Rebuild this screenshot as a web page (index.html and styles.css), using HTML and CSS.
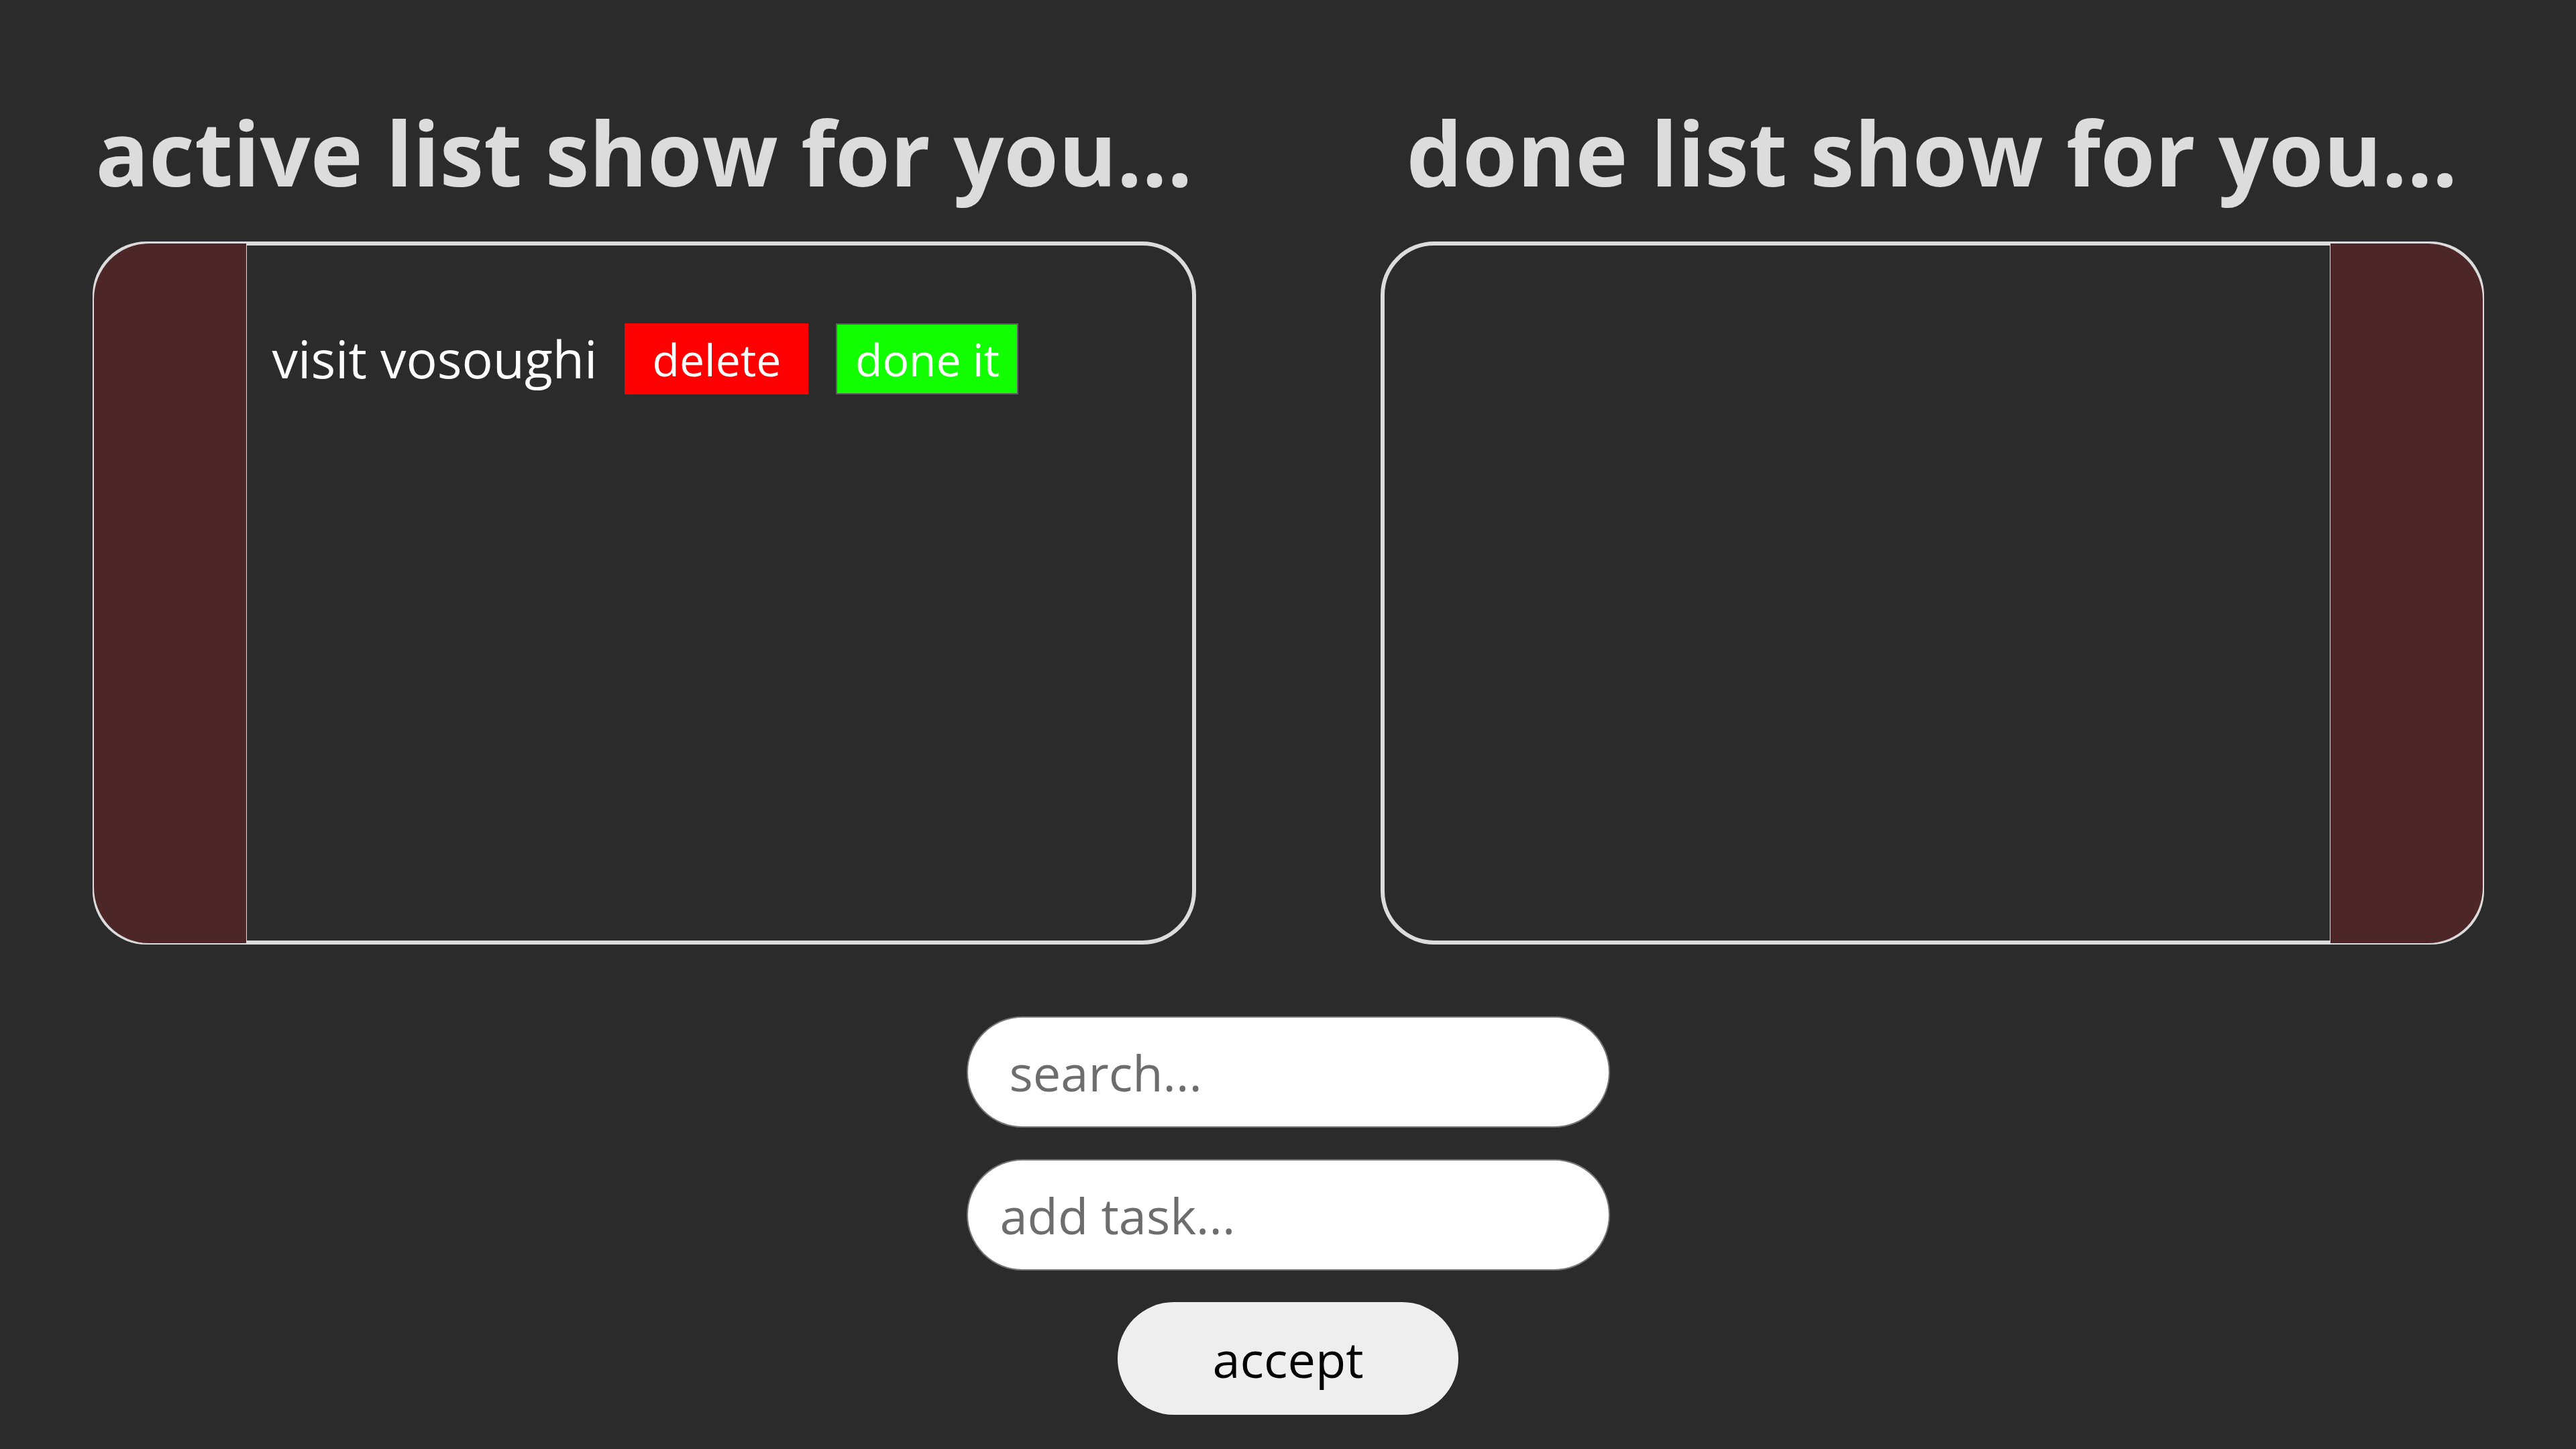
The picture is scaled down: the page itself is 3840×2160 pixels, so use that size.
FILE: index.html
```html
<!DOCTYPE html>
<html lang="en">
<head>
<meta charset="utf-8">
<title>todo list</title>
<link rel="stylesheet" href="styles.css">
</head>
<body>
<main class="page">
  <section class="lists">
    <div class="column">
      <h1 class="title">active list show for you...</h1>
      <div class="box">
        <div class="side side-left"></div>
        <ul class="items">
          <li class="item">
            <span class="item-text">visit vosoughi</span>
            <button class="btn btn-delete">delete</button>
            <button class="btn btn-done">done it</button>
          </li>
        </ul>
      </div>
    </div>
    <div class="column">
      <h1 class="title">done list show for you...</h1>
      <div class="box">
        <ul class="items"></ul>
        <div class="side side-right"></div>
      </div>
    </div>
  </section>
  <section class="controls">
    <input class="field field-search" type="text" placeholder="search...">
    <input class="field field-add" type="text" placeholder="add task...">
    <button class="accept">accept</button>
  </section>
</main>
</body>
</html>
```

FILE: styles.css
```css
html, body {
  margin: 0;
  padding: 0;
  background: #2b2b2b;
}

body {
  font-family: "Open Sans", "Noto Sans", sans-serif;
  width: 3840px;
  height: 2160px;
  overflow: hidden;
}

.page {
  padding-top: 146px;
}

.lists {
  display: grid;
  grid-template-columns: 1fr 1fr;
}

.column {
  display: flex;
  flex-direction: column;
  align-items: center;
}

.title {
  margin: 0 0 51px 0;
  font-size: 132px;
  line-height: 163px;
  font-weight: 700;
  color: #dcdcdc;
  text-align: center;
  white-space: nowrap;
}

.box {
  box-sizing: border-box;
  width: 1645px;
  height: 1048px;
  border: 6px solid #dcdcdc;
  border-radius: 80px;
  display: flex;
}

.side {
  box-sizing: border-box;
  width: 230px;
  flex: none;
  background: #4d2627;
  border: 1px solid #dcdcdc;
}

.side-left {
  margin: -4px 0 -5px -6px;
  border-left-width: 2px;
  border-radius: 84px 0 0 84px;
}

.side-right {
  margin: -4px -6px -5px 0;
  border-right-width: 2px;
  border-radius: 0 84px 84px 0;
}

.items {
  flex: 1;
  list-style: none;
  margin: 0;
  padding: 116px 0 0 38px;
}

.item {
  display: flex;
  align-items: center;
  gap: 41px;
}

.item-text {
  font-size: 77px;
  color: #ffffff;
  line-height: 106px;
}

.btn {
  box-sizing: border-box;
  height: 106px;
  padding: 0;
  font-family: inherit;
  font-size: 66px;
  color: #ffffff;
  line-height: 1;
}

.btn-delete {
  width: 274px;
  background: #ff0000;
  border: none;
}

.btn-done {
  width: 272px;
  background: #11ff00;
  border: 2px solid #5f5f5f;
}

.controls {
  display: flex;
  flex-direction: column;
  align-items: center;
  margin-top: 107px;
}

.field {
  box-sizing: border-box;
  width: 959px;
  height: 166px;
  border: 2px solid #767676;
  border-radius: 83px;
  background: #ffffff;
  font-family: inherit;
  font-size: 74px;
  color: #000;
  outline: none;
}

.field::placeholder {
  color: #6d6d6d;
}

.field-search {
  padding: 0 0 0 62px;
}

.field-add {
  margin-top: 47px;
  padding: 0 0 0 48px;
}

.accept {
  box-sizing: border-box;
  margin-top: 47px;
  width: 508px;
  height: 168px;
  border: none;
  border-radius: 84px;
  background: #eeeeee;
  font-family: inherit;
  font-size: 74px;
  color: #000;
  padding: 0;
}
```
